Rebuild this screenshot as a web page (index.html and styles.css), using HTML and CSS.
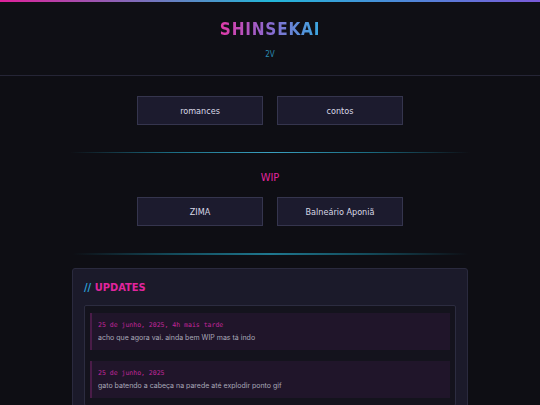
FILE: index.html
```html
<!DOCTYPE html>
<html lang="pt">
<head>
<meta charset="utf-8">
<link rel="stylesheet" href="styles.css">
</head>
<body>
<div class="topbar"></div>
<header class="header">
  <h1 class="title">SHINSEKAI</h1>
  <div class="subtitle">2V</div>
</header>
<nav class="btnrow first">
  <a class="btn">romances</a>
  <a class="btn">contos</a>
</nav>
<div class="divider"></div>
<h2 class="section">WIP</h2>
<nav class="btnrow">
  <a class="btn">ZIMA</a>
  <a class="btn">Balneário Aponiã</a>
</nav>
<div class="divider d2"></div>
<section class="panel">
  <h3 class="panel-title"><span class="slashes">//</span> UPDATES</h3>
  <div class="feed">
    <div class="entry">
      <div class="date">25 de junho, 2025, 4h mais tarde</div>
      <div class="text">acho que agora vai. ainda bem WIP mas tá indo</div>
    </div>
    <div class="entry">
      <div class="date">25 de junho, 2025</div>
      <div class="text">gato batendo a cabeça na parede até explodir ponto gif</div>
    </div>
  </div>
</section>
</body>
</html>
```
FILE: styles.css
```css
html, body { margin: 0; padding: 0; }
body {
  background: #0e0e14;
  color: #c8c8d8;
  font-family: "DejaVu Sans Condensed", "Liberation Sans", sans-serif;
  width: 540px;
  height: 405px;
  overflow: hidden;
}
.topbar {
  height: 2px;
  background: linear-gradient(90deg, #e0209a 0%, #22b6d8 50%, #7a5ad8 100%);
}
.header {
  height: 73px;
  border-bottom: 1px solid #252536;
  text-align: center;
  background: #0f0f15;
}
.title {
  margin: 0;
  padding-top: 17px;
  font-family: "DejaVu Sans Condensed", sans-serif;
  font-size: 17px;
  line-height: 20px;
  font-weight: bold;
  letter-spacing: 0.8px;
  display: inline-block;
  background: linear-gradient(90deg, #e03aa8 0%, #8a6ad0 50%, #3aa8e0 100%);
  -webkit-background-clip: text;
  background-clip: text;
  color: transparent;
}
.subtitle {
  margin-top: 11px;
  font-size: 8px;
  color: #2a8ab0;
  line-height: 10px;
}
.btnrow {
  display: flex;
  justify-content: center;
  gap: 14px;
}
.btnrow.first { margin-top: 20px; }
.btn {
  width: 124px;
  height: 27px;
  background: #1c1b2e;
  border: 1px solid #35354e;
  color: #d8d8e6;
  font-size: 9px;
  display: flex;
  align-items: center;
  justify-content: center;
}
.divider {
  margin: 27px auto 0;
  width: 400px;
  height: 1px;
  background: linear-gradient(90deg, transparent 0%, #1a6a80 25%, #3aa0c0 50%, #1a6a80 75%, transparent 100%);
}
.divider.d2 {
  margin-top: 27px;
  width: 395px;
  height: 2px;
  background: linear-gradient(90deg, transparent 0%, #134a5a 25%, #1f7890 50%, #134a5a 75%, transparent 100%);
}
.section {
  margin: 18px 0 13px;
  text-align: center;
  font-size: 11px;
  line-height: 13px;
  color: #e0259e;
  font-weight: normal;
}
.panel {
  margin: 13px 72px 0;
  background: #1b1a2a;
  border: 1px solid #2a2a3e;
  border-radius: 3px;
  padding: 12px 11px 0;
  height: 200px;
}
.panel-title {
  margin: 0 0 10px;
  font-size: 11px;
  line-height: 14px;
  color: #e0259e;
  font-weight: bold;
}
.slashes { color: #2aa0d8; }
.feed {
  background: #14131d;
  border: 1px solid #2c2c40;
  border-radius: 2px;
  padding: 7px 5px;
  display: flex;
  flex-direction: column;
  gap: 11px;
}
.entry {
  background: #20152a;
  border-left: 2px solid #4a1c48;
  padding: 8px 6px 7px;
}
.date {
  font-family: "DejaVu Sans Mono", "Liberation Mono", monospace;
  font-size: 6.5px;
  color: #c0269a;
  line-height: 9px;
}
.text {
  margin-top: 3px;
  font-family: Inter, "Noto Sans", sans-serif;
  font-size: 7px;
  color: #a8a8b8;
  line-height: 10px;
}
```
